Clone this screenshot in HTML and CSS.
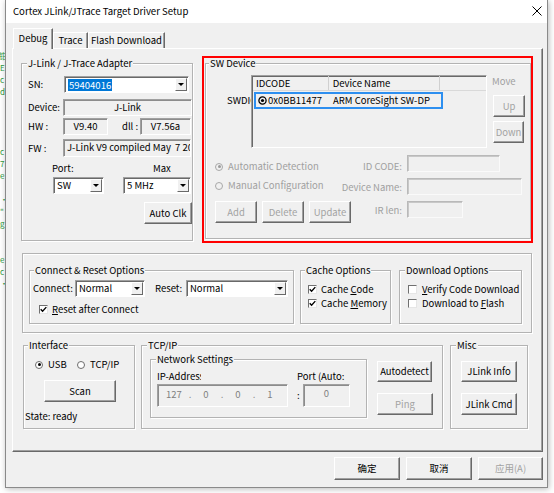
FILE: index.html
```html
<!DOCTYPE html>
<html>
<head>
<meta charset="utf-8">
<title>Cortex JLink/JTrace Target Driver Setup</title>
<link rel="stylesheet" href="styles.css">
</head>
<body>
<div class="bgstrip">钳<br>E<br>c<br>d<br><br><br><br><br>c<br>7<br>e<br><br>•<br>"<br>g<br><br><br>e<br>c<br>•</div>
<div class="window">
  <div class="titlebar">
    <span class="title">Cortex JLink/JTrace Target Driver Setup</span>
    <svg class="close" width="10" height="10" viewBox="0 0 10 10"><path d="M0.5 0.5 L9.5 9.5 M9.5 0.5 L0.5 9.5" stroke="#000" stroke-width="1" fill="none"/></svg>
  </div>
  <div class="client">
    <div class="tabs">
      <div class="tab active t-debug">Debug</div>
      <div class="tab t-trace">Trace</div>
      <div class="tab t-flash">Flash Download</div>
    </div>
    <div class="page">
      <div class="row1">
        <div class="group g-adapter">
          <span class="legend l7">J-Link / J-Trace Adapter</span>
          <div class="r r-sn"><span class="lbl w36">SN:</span><div class="combo w125"><span class="sel">59404016</span><span class="dd"></span></div></div>
          <div class="r r-dev"><span class="lbl w35">Device:</span><div class="box ro center w129">J-Link</div></div>
          <div class="r r-hw"><span class="lbl w35">HW :</span><div class="box ro center w45">V9.40</div><span class="lbl dll">dll :</span><div class="box ro center w51">V7.56a</div></div>
          <div class="r r-fw"><span class="lbl w35">FW :</span><div class="box ro fw w128">J-Link V9 compiled May  7 2021 10:16:22</div></div>
          <div class="r r-pm"><span class="lbl port">Port:</span><span class="lbl">Max</span></div>
          <div class="r r-cmb"><div class="combo w51"><span>SW</span><span class="dd"></span></div><div class="combo w68 maxc"><span>5 MHz</span><span class="dd"></span></div></div>
          <button class="btn autoclk">Auto Clk</button>
        </div>
        <div class="group g-sw">
          <span class="legend l3">SW Device</span>
          <div class="sw-top">
            <span class="lbl swdi">SWDIO</span>
            <div class="listview">
              <div class="lv-head"><span class="h1">IDCODE</span><span class="h2">Device Name</span><span class="h3"></span></div>
              <div class="lv-row"><span class="c1"><svg width="9" height="9" viewBox="0 0 9 9"><circle cx="4.5" cy="4.5" r="3.6" fill="none" stroke="#000" stroke-width="1.3"/><circle cx="4.5" cy="4.5" r="1.6" fill="#000"/></svg>0x0BB11477</span><span class="c2">ARM CoreSight SW-DP</span></div>
            </div>
            <div class="move">
              <span class="dis movelbl">Move</span>
              <button class="btn dis up">Up</button>
              <button class="btn dis down">Down</button>
            </div>
          </div>
          <div class="sw-low">
            <div class="sw-row ra">
              <div class="sw-left"><span class="radio dis m5"><span class="rb on"></span>Automatic Detection</span><span class="dis m5">ID CODE:</span></div>
              <div class="box dbox w93 h18"></div>
            </div>
            <div class="sw-row rb-row">
              <div class="sw-left"><span class="radio dis m1"><span class="rb"></span>Manual Configuration</span><span class="dis m3">Device Name:</span></div>
              <div class="box dbox w115 h19"></div>
            </div>
            <div class="sw-row rc">
              <div class="sw-left"><div class="sw-btns"><button class="btn dis sb">Add</button><button class="btn dis sb">Delete</button><button class="btn dis sb">Update</button></div><span class="dis m3">IR len:</span></div>
              <div class="box dbox w56 h18"></div>
            </div>
          </div>
        </div>
      </div>

      <div class="group frame">
        <div class="group g-connect">
          <span class="legend">Connect &amp; Reset Options</span>
          <div class="r cr-row"><span class="lbl w42">Connect:</span><div class="combo w70"><span>Normal</span><span class="dd"></span></div><span class="lbl reset">Reset:</span><div class="combo w102"><span>Normal</span><span class="dd"></span></div></div>
          <div class="check cr-check"><span class="cb"><svg width="7" height="7" viewBox="0 0 7 7"><path d="M0.7 3.2 L2.6 5.2 L6.3 1.1" fill="none" stroke="#000" stroke-width="1.4"/></svg></span><span><u>R</u>eset after Connect</span></div>
        </div>
        <div class="group g-cache">
          <span class="legend">Cache Options</span>
          <div class="chk-list">
            <div class="check"><span class="cb"><svg width="7" height="7" viewBox="0 0 7 7"><path d="M0.7 3.2 L2.6 5.2 L6.3 1.1" fill="none" stroke="#000" stroke-width="1.4"/></svg></span><span>Cache <u>C</u>ode</span></div>
            <div class="check"><span class="cb"><svg width="7" height="7" viewBox="0 0 7 7"><path d="M0.7 3.2 L2.6 5.2 L6.3 1.1" fill="none" stroke="#000" stroke-width="1.4"/></svg></span><span>Cache <u>M</u>emory</span></div>
          </div>
        </div>
        <div class="group g-dl">
          <span class="legend l5">Download Options</span>
          <div class="chk-list dl-list">
            <div class="check"><span class="cb"></span><span><u>V</u>erify Code Download</span></div>
            <div class="check"><span class="cb"></span><span>Download to <u>F</u>lash</span></div>
          </div>
        </div>
      </div>

      <div class="row3">
        <div class="group g-iface">
          <span class="legend">Interface</span>
          <div class="if-radios"><span class="radio usb"><span class="rb on"></span>USB</span><span class="radio"><span class="rb"></span>TCP/IP</span></div>
          <button class="btn scan">Scan</button>
          <div class="state">State: ready</div>
        </div>
        <div class="group g-tcp">
          <span class="legend l5">TCP/IP</span>
          <div class="tcp-inner">
            <div class="group g-net">
              <span class="legend l5">Network Settings</span>
              <div class="net-inner">
                <div class="colA">
                  <div class="clip iplbl">IP-Address</div>
                  <div class="box ipbox"><span class="oct">127</span><span class="dot">.</span><span class="oct">0</span><span class="dot">.</span><span class="oct">0</span><span class="dot">.</span><span class="oct">1</span></div>
                </div>
                <div class="colB">
                  <div class="clip portlbl">Port (Auto:</div>
                  <div class="portrow"><span class="colon">:</span><div class="box portbox">0</div></div>
                </div>
              </div>
            </div>
            <div class="tcp-btns">
              <button class="btn b-auto">Autodetect</button>
              <button class="btn dis b-ping">Ping</button>
            </div>
          </div>
        </div>
        <div class="group g-misc">
          <span class="legend l5">Misc</span>
          <div class="misc-btns">
            <button class="btn b-info">JLink Info</button>
            <button class="btn b-cmd">JLink Cmd</button>
          </div>
        </div>
      </div>
    </div>
    <div class="footer">
      <button class="btn fb w66">确定</button>
      <button class="btn fb w66">取消</button>
      <button class="btn fb dis w65">应用(A)</button>
    </div>
  </div>
  <div class="annot"></div>
</div>
</body>
</html>
```

FILE: styles.css
```css
* { box-sizing: border-box; }
html, body { margin: 0; padding: 0; }
body {
  width: 554px; height: 493px; overflow: hidden; background: #fff;
  display: flex; align-items: flex-start;
  font-family: "Noto Sans CJK SC", "Noto Sans", sans-serif;
  font-size: 9.5px; line-height: 13px; color: #000;
}
button { font: inherit; }
u { text-decoration: underline; text-underline-offset: 1px; }

.bgstrip {
  width: 5px; height: 493px; overflow: hidden; padding-top: 50px;
  color: #2e9a3c; font-size: 8px; line-height: 12px; white-space: nowrap;
  text-indent: -1px;
}

.window {
  width: 543px; height: 488px;
  border: 1px solid #8a8a8a; border-top: 0;
  background: #f0f0f0;
  box-shadow: 1px 1px 6px rgba(0,0,0,0.28);
  position: relative;
  display: flex; flex-direction: column;
}
.titlebar {
  height: 23px; background: #fff; flex: none;
  display: flex; align-items: center; justify-content: space-between;
  padding: 0 5px 0 7px; font-size: 9.6px;
}
.close { margin-top: -1px; }

.client { flex: 1; padding: 6px 0 0 6px; }

.tabs { display: flex; align-items: flex-end; height: 19px; margin-left: 1px; position: relative; z-index: 1; }
.tab {
  height: 16px; background: #f0f0f0;
  border: 1px solid; border-bottom: 0;
  border-color: #fff #696969 #f0f0f0 #fff;
  box-shadow: inset -1px 0 0 #a0a0a0;
  text-align: center; line-height: 15px; white-space: nowrap;
}
.tab.active { height: 21px; margin-bottom: -1px; line-height: 19px; }
.t-debug { width: 40px; }
.t-trace { width: 35px; }
.t-flash { width: 77px; }

.page {
  width: 531px; height: 404px;
  border: 1px solid; border-color: #fff #696969 #696969 #fff;
  box-shadow: inset -1px -1px 0 #a0a0a0;
  padding: 14px 0 0 8px;
}

.group { border: 1px solid #b3b3b3; box-shadow: inset 1px 1px 0 #fff, 1px 1px 0 #fff; }
.legend {
  display: block; width: max-content; height: 13px;
  margin: -7px 0 -6px 4px; padding: 0 1px;
  background: #f0f0f0; white-space: nowrap;
}
.legend.l7 { margin-left: 5px; }
.legend.l3 { margin-left: 3px; }
.legend.l5 { margin-left: 5px; }

.r { display: flex; align-items: center; }
.lbl { white-space: nowrap; flex: none; }
.w35 { width: 35px; } .w36 { width: 36px; } .w42 { width: 42px; }
.w45 { width: 45px; } .w51 { width: 51px; } .w56 { width: 56px; }
.w65 { width: 65px; } .w66 { width: 66px; } .w68 { width: 68px; } .w70 { width: 70px; }
.w93 { width: 93px; } .w102 { width: 102px; } .w115 { width: 115px; }
.w125 { width: 125px; } .w128 { width: 128px; } .w129 { width: 129px; }
.h18 { height: 18px; } .h19 { height: 19px; }

.box {
  height: 17px; flex: none;
  border: 1px solid; border-color: #a0a0a0 #fff #fff #a0a0a0;
  box-shadow: inset 1px 1px 0 #8c8c8c;
  background: #f0f0f0; white-space: nowrap; overflow: hidden;
  line-height: 14px;
}
.box.center { text-align: center; }
.box.fw { height: 18px; white-space: pre; padding-left: 3px; line-height: 15px; }
.dbox { border-color: #b9b9b9 #fafafa #fafafa #b9b9b9; box-shadow: inset 1px 1px 0 #c8c8c8; }

.combo {
  height: 17px; flex: none; display: flex; align-items: center;
  border: 1px solid; border-color: #a0a0a0 #fff #fff #a0a0a0;
  box-shadow: inset 1px 1px 0 #696969;
  background: #fff; padding: 1px 1px 1px 3px; white-space: nowrap;
}
.combo .dd {
  margin-left: auto; width: 12px; height: 13px; flex: none;
  background: #f0f0f0;
  border: 1px solid; border-color: #fff #696969 #696969 #fff;
  display: flex; align-items: center; justify-content: center;
}
.combo .dd::after {
  content: ""; width: 0; height: 0;
  border-left: 3px solid transparent; border-right: 3px solid transparent;
  border-top: 3px solid #000;
}
.combo .sel { background: #0078d7; color: #fff; padding: 0 1px; line-height: 12px; }

.btn {
  display: block; color: #000; background: #f0f0f0; padding: 0;
  border: 1px solid; border-color: #fff #696969 #696969 #fff;
  box-shadow: inset -1px -1px 0 #a0a0a0;
  text-align: center; line-height: 13px; white-space: nowrap;
}
.dis { color: #a0a0a0; }
.btn.dis { color: #a3a3a3; }

/* Adapter group */
.g-adapter { width: 172px; height: 178px; flex: none; }
.r-sn { margin-top: 12px; padding-left: 6px; }
.r-dev { margin-top: 6px; padding-left: 6px; }
.r-hw { margin-top: 2px; padding-left: 6px; }
.dll { width: 18px; margin-left: 14px; }
.r-fw { margin-top: 4px; padding-left: 6px; }
.r-pm { margin-top: 5px; padding-left: 30px; height: 13px; }
.port { width: 101px; }
.r-cmb { margin-top: 2px; padding-left: 31px; }
.maxc { margin-left: 19px; }
.autoclk { margin: 8px 0 0 122px; width: 48px; height: 22px; }

.row1 { display: flex; align-items: flex-start; gap: 12px; }

/* SW device */
.g-sw { width: 326px; height: 176px; flex: none; }
.sw-top { display: flex; align-items: flex-start; margin-top: 11px; padding-left: 21px; }
.swdi { width: 24px; overflow: hidden; margin-top: 19px; }
.listview {
  width: 236px; height: 73px; flex: none;
  border: 1px solid; border-color: #a0a0a0 #fff #fff #a0a0a0;
  box-shadow: inset 1px 1px 0 #696969;
  background: #f0f0f0;
}
.lv-head { display: flex; height: 15px; border-bottom: 1px solid #d9d9d9; margin-left: 1px; }
.lv-head span { border-right: 1px solid #d0d0d0; line-height: 15px; white-space: nowrap; }
.lv-head .h1 { width: 76px; padding-left: 3px; }
.lv-head .h2 { width: 112px; padding-left: 4px; }
.lv-head .h3 { width: 46px; border-right: 0; }
.lv-row {
  margin: 1px 0 0 2px; width: 189px; height: 17px;
  border: 2px solid #2d8ff0;
  display: grid; grid-template-columns: 77px auto; align-items: center;
  line-height: 13px; white-space: nowrap;
}
.lv-row .c1 { display: flex; align-items: center; padding-left: 2px; }
.lv-row .c1 svg { margin-right: 1px; flex: none; }
.move { margin-left: 5px; width: 33px; }
.movelbl { display: block; height: 13px; }
.up { width: 32px; height: 22px; margin: 7px 0 0 1px; }
.down { width: 31px; height: 22px; margin: 4px 0 0 1px; }

.sw-low { margin-top: 7px; padding: 0 3px 0 9px; }
.sw-row { display: grid; grid-template-columns: 1fr 120px; column-gap: 5px; }
.sw-row.ra { height: 19px; }
.sw-row.rb-row { height: 19px; margin-top: 4px; }
.sw-row.rc { height: 22px; margin-top: 4px; }
.sw-left { display: flex; justify-content: space-between; align-items: flex-start; white-space: nowrap; }
.m1 { margin-top: 1px; } .m3 { margin-top: 3px; } .m5 { margin-top: 5px; }
.sw-btns { display: flex; gap: 5px; }
.sb { width: 42px; height: 22px; }

.radio { display: flex; align-items: center; gap: 5px; white-space: nowrap; }
.rb {
  width: 8px; height: 8px; border-radius: 50%; flex: none;
  border: 1px solid #6d6d6d; background: #fff;
  display: flex; align-items: center; justify-content: center;
}
.rb.on::after { content: ""; width: 3px; height: 3px; border-radius: 50%; background: #000; }
.radio.dis .rb { border-color: #a8a8a8; background: #f0f0f0; }
.radio.dis .rb.on::after { background: #9a9a9a; }

/* Row 2 */
.frame {
  margin: 12px 0 0 1px; width: 510px; height: 80px;
  padding: 16px 0 0 6px; display: flex; align-items: flex-start;
}
.g-connect { width: 265px; height: 54px; flex: none; }
.cr-row { margin-top: 9px; padding-left: 3px; }
.reset { width: 31px; margin-left: 10px; }
.check { display: flex; align-items: center; height: 14px; white-space: nowrap; }
.cb {
  width: 9px; height: 9px; flex: none; margin-right: 4px;
  border: 1px solid; border-color: #707070 #e6e6e6 #e6e6e6 #707070;
  background: #fff; display: flex; align-items: center; justify-content: center;
}
.cr-check { margin-top: 5px; padding-left: 9px; }
.g-cache { width: 91px; height: 54px; margin-left: 6px; flex: none; }
.g-dl { width: 123px; height: 54px; margin-left: 8px; flex: none; }
.chk-list { padding: 11px 0 0 7px; }
.dl-list { padding-left: 8px; }
.dl-list .cb { margin-right: 5px; }

/* Row 3 */
.row3 { display: flex; align-items: flex-start; margin: 12px 0 0 2px; }
.g-iface { width: 112px; height: 84px; flex: none; }
.if-radios { display: flex; align-items: center; height: 13px; margin-top: 12px; padding-left: 11px; }
.usb { width: 42px; }
.scan { margin: 9px 0 0 20px; width: 72px; height: 22px; }
.state { margin-top: 8px; padding-left: 1px; }

.g-tcp { width: 302px; height: 84px; margin-left: 6px; flex: none; }
.tcp-inner { display: flex; align-items: flex-start; }
.g-net { width: 217px; height: 59px; margin: 13px 0 0 8px; flex: none; }
.net-inner { display: flex; padding-left: 6px; }
.colA { margin-top: 10px; }
.clip { height: 13px; overflow: hidden; white-space: nowrap; }
.iplbl { width: 44px; }
.ipbox {
  width: 131px; height: 23px; margin-top: 1px;
  display: flex; padding: 3px 0 0 4px; color: #808080; line-height: 13px;
}
.oct { width: 24px; text-align: center; }
.dot { width: 8px; text-align: center; }
.colB { margin: 10px 0 0 8px; }
.portlbl { width: 50px; padding-left: 1px; }
.portrow { display: flex; align-items: center; margin-top: 1px; }
.colon { width: 7px; padding-left: 1px; }
.portbox { width: 47px; height: 23px; text-align: center; color: #808080; padding-top: 2px; line-height: 13px; }

.tcp-btns { margin: 15px 0 0 10px; }
.b-auto { width: 55px; height: 21px; }
.b-ping { width: 56px; height: 22px; margin-top: 11px; }

.g-misc { width: 78px; height: 84px; margin-left: 7px; flex: none; }
.misc-btns { padding: 15px 0 0 10px; }
.b-info { width: 56px; height: 21px; }
.b-cmd { width: 56px; height: 22px; margin-top: 11px; }

/* Footer */
.footer { display: flex; justify-content: flex-end; gap: 6px; margin-top: 5px; padding-right: 4px; }
.fb { height: 23px; }

/* red annotation overlay */
.annot {
  position: absolute; left: 196px; top: 56px; width: 331px; height: 187px;
  border: 2px solid #ff0000; pointer-events: none;
}
```
